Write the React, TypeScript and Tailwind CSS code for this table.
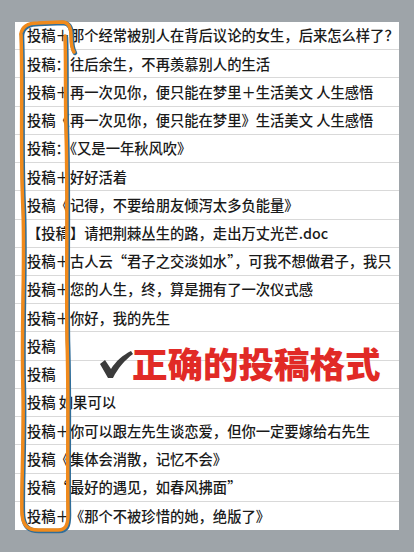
import React from "react";

const rows: string[] = [
  "投稿＋那个经常被别人在背后议论的女生，后来怎么样了？",
  "投稿：往后余生，不再羡慕别人的生活",
  "投稿＋再一次见你，便只能在梦里＋生活美文 人生感悟",
  "投稿《再一次见你，便只能在梦里》生活美文 人生感悟",
  "投稿：《又是一年秋风吹》",
  "投稿＋好好活着",
  "投稿《记得，不要给朋友倾泻太多负能量》",
  "【投稿】请把荆棘丛生的路，走出万丈光芒.doc",
  "投稿＋古人云“君子之交淡如水”，可我不想做君子，我只",
  "投稿＋您的人生，终，算是拥有了一次仪式感",
  "投稿＋你好，我的先生",
  "投稿",
  "投稿",
  "投稿 如果可以",
  "投稿＋你可以跟左先生谈恋爱，但你一定要嫁给右先生",
  "投稿《集体会消散，记忆不会》",
  "投稿“最好的遇见，如春风拂面”",
  "投稿＋《那个不被珍惜的她，绝版了》",
];

export default function App() {
  return (
    <div
      className="relative w-[414px] h-[552px] overflow-hidden bg-[#9ea4a9] pt-[22px] pl-[15px]"
      style={{ fontFamily: '"Noto Sans CJK SC", "Noto Sans", sans-serif' }}
    >
      <div className="w-[384px] h-[508px] bg-white flex flex-col overflow-hidden">
        {rows.map((r, i) => (
          <div
            key={i}
            className={`h-[28.22px] shrink-0 flex items-center pl-[12px] whitespace-nowrap overflow-hidden text-[14.3px] leading-none font-medium text-[#1a1a1a] ${
              i < rows.length - 1 ? "border-b border-[#d9d9d9]" : ""
            }`}
          >
            {r}
          </div>
        ))}
      </div>

      {/* hand-drawn orange highlight */}
      <svg
        className="absolute left-0 top-0 pointer-events-none"
        width="414"
        height="552"
        viewBox="0 0 414 552"
      >
        <g fill="none" strokeLinecap="round" strokeLinejoin="round">
          <path
            d="M21 34 C22 26 28 23 38 23 L62 22 C69 22 71 28 71 36 C71 44 72 49 74 52"
            stroke="#2f6d9a"
            strokeWidth="4.5"
            transform="translate(1 1)"
          />
          <path
            d="M21 34 C22 26 28 23 38 23 L62 22 C69 22 71 28 71 36 C71 44 72 49 74 52"
            stroke="#f08a1c"
            strokeWidth="3.5"
          />
          <path
            d="M21 34 C23 90 20 150 23 210 C25 270 21 330 23 390 C24 440 21 490 22 514 C23 526 28 530 38 530 L58 530 C66 530 68 525 68 514 C67 460 69 400 67 340 C66 270 68 200 66 130 C65 90 66 60 65 36"
            stroke="#2f6d9a"
            strokeWidth="4.5"
            transform="translate(1 1)"
          />
          <path
            d="M21 34 C23 90 20 150 23 210 C25 270 21 330 23 390 C24 440 21 490 22 514 C23 526 28 530 38 530 L58 530 C66 530 68 525 68 514 C67 460 69 400 67 340 C66 270 68 200 66 130 C65 90 66 60 65 36"
            stroke="#f08a1c"
            strokeWidth="3.5"
          />
        </g>
      </svg>

      {/* check mark */}
      <svg
        className="absolute left-[98px] top-[350px]"
        width="36"
        height="30"
        viewBox="0 0 36 30"
      >
        <path
          d="M2 14 L7 10 L13 19 C18 11 25 5 33 1 L35 4 C27 10 20 18 15 28 L10 28 Z"
          fill="#3b3b3b"
        />
      </svg>

      {/* red caption */}
      <div className="absolute left-[132px] top-[345px] text-[35.5px] leading-none font-black text-[#e12a26] whitespace-nowrap">
        正确的投稿格式
      </div>
    </div>
  );
}
